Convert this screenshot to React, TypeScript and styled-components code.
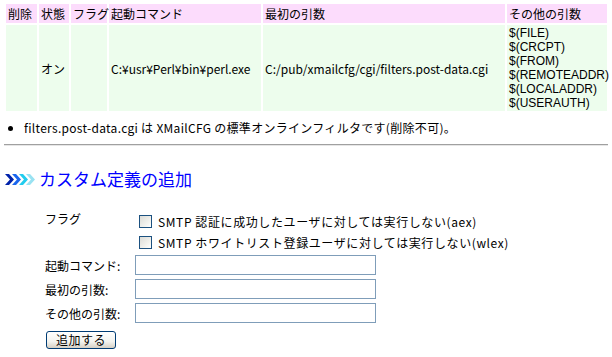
import React from "react";
import styled, { createGlobalStyle } from "styled-components";

const GlobalStyle = createGlobalStyle`
  html, body { margin: 0; padding: 0; background: #ffffff; }
  body {
    font-family: "Noto Sans CJK JP", "DejaVu Sans", sans-serif;
    font-size: 12px;
    color: #000000;
  }
  * { box-sizing: border-box; }
`;

const Page = styled.div`
  width: 612px;
  height: 357px;
  padding: 4px 4px 0 4px;
  overflow: hidden;
`;

const FilterTable = styled.div`
  display: grid;
  grid-template-columns: 31px 30px 36px 152px 242px 100px;
  grid-template-rows: 19px 86px;
  gap: 2px;
  margin-left: 2px;
`;

const HeadCell = styled.div`
  background: #fcdcfc;
  padding: 0 2px;
  display: flex;
  align-items: center;
  line-height: 19px;
  white-space: nowrap;
`;

const BodyCell = styled.div`
  background: #edfded;
  padding: 0 2px;
  display: flex;
  align-items: center;
  white-space: nowrap;
`;

const ArgList = styled.div`
  display: flex;
  flex-direction: column;
  font-family: "Liberation Sans", "Noto Sans CJK JP", sans-serif;
  font-size: 12px;
`;

const Arg = styled.div`
  height: 14px;
  line-height: 14px;
`;

const Note = styled.ul`
  margin: 10px 0 0 0;
  padding: 0 0 0 20px;
  line-height: 14px;
  list-style: disc;
  white-space: nowrap;
  letter-spacing: 0.3px;
`;

const Rule = styled.hr`
  margin: 9px 0 0 0;
  border: none;
  border-top: 1px solid #a0a0a0;
  border-bottom: 1px solid #e6e6e6;
  height: 0;
`;

const Heading = styled.h2`
  margin: 23px 0 0 1px;
  display: flex;
  align-items: center;
  gap: 3px;
  font-size: 17px;
  font-weight: normal;
  color: #0000ff;
  line-height: 20px;
  height: 20px;
`;

const Form = styled.div`
  margin: 23px 0 0 41px;
  display: grid;
  grid-template-columns: 90px 260px;
`;

const Label = styled.div<{ $top?: boolean }>`
  height: ${(p) => (p.$top ? "42px" : "24px")};
  line-height: ${(p) => (p.$top ? "13px" : "22px")};
  padding-top: ${(p) => (p.$top ? "0px" : "1px")};
  white-space: nowrap;
`;

const Checks = styled.div`
  display: flex;
  flex-direction: column;
`;

const CheckRow = styled.label`
  height: 21px;
  display: flex;
  align-items: center;
  gap: 6px;
  padding-left: 4px;
  padding-bottom: 2px;
  white-space: nowrap;
  letter-spacing: 0.6px;
`;

const Box = styled.input`
  appearance: none;
  flex: 0 0 13px;
  margin: 0;
  width: 13px;
  height: 13px;
  border: 1px solid #1c5180;
  background: linear-gradient(135deg, #dcdcd7 0%, #f4f4f0 70%, #ffffff 100%);
`;

const FieldCell = styled.div`
  height: 24px;
  padding-top: 1px;
`;

const TextField = styled.input`
  width: 241px;
  height: 20px;
  margin: 0;
  border: 1px solid #7f9db9;
  background: #ffffff;
  font-family: inherit;
  font-size: 12px;
  padding: 0 2px;
`;

const ButtonRow = styled.div`
  grid-column: 1 / span 2;
  padding-top: 5px;
  padding-left: 1px;
`;

const AddButton = styled.button`
  width: 70px;
  height: 18px;
  margin: 0;
  padding: 0;
  border: 1px solid #003c74;
  border-radius: 3px;
  background: linear-gradient(180deg, #ffffff 0%, #f3f3ef 60%, #d6d0c5 100%);
  font-family: inherit;
  font-size: 12px;
  line-height: 16px;
  letter-spacing: 0.5px;
  color: #000000;
`;

const Chevrons = () => (
  <svg width="31" height="11" viewBox="0 0 31 11">
    <path d="M0 0h4l5 5.5-5 5.5H0l5-5.5z" fill="#0022aa" />
    <path d="M7 0h4l5 5.5-5 5.5H7l5-5.5z" fill="#1a66ee" />
    <path d="M14 0h4l5 5.5-5 5.5h-4l5-5.5z" fill="#22ccee" />
    <path d="M21 0h4l5 5.5-5 5.5h-4l5-5.5z" fill="#99e2f2" />
  </svg>
);

const args = [
  "$(FILE)",
  "$(CRCPT)",
  "$(FROM)",
  "$(REMOTEADDR)",
  "$(LOCALADDR)",
  "$(USERAUTH)",
];

export default function App() {
  return (
    <>
      <GlobalStyle />
      <Page>
        <FilterTable>
          <HeadCell>削除</HeadCell>
          <HeadCell>状態</HeadCell>
          <HeadCell>フラグ</HeadCell>
          <HeadCell>起動コマンド</HeadCell>
          <HeadCell>最初の引数</HeadCell>
          <HeadCell>その他の引数</HeadCell>
          <BodyCell />
          <BodyCell>オン</BodyCell>
          <BodyCell />
          <BodyCell>C:¥usr¥Perl¥bin¥perl.exe</BodyCell>
          <BodyCell>C:/pub/xmailcfg/cgi/filters.post-data.cgi</BodyCell>
          <BodyCell>
            <ArgList>
              {args.map((a) => (
                <Arg key={a}>{a}</Arg>
              ))}
            </ArgList>
          </BodyCell>
        </FilterTable>
        <Note>
          <li>filters.post-data.cgi は XMailCFG の標準オンラインフィルタです(削除不可)。</li>
        </Note>
        <Rule />
        <Heading>
          <Chevrons />
          カスタム定義の追加
        </Heading>
        <Form>
          <Label $top>フラグ</Label>
          <Checks>
            <CheckRow>
              <Box type="checkbox" />
              SMTP 認証に成功したユーザに対しては実行しない(aex)
            </CheckRow>
            <CheckRow>
              <Box type="checkbox" />
              SMTP ホワイトリスト登録ユーザに対しては実行しない(wlex)
            </CheckRow>
          </Checks>
          <Label>起動コマンド:</Label>
          <FieldCell>
            <TextField type="text" />
          </FieldCell>
          <Label>最初の引数:</Label>
          <FieldCell>
            <TextField type="text" />
          </FieldCell>
          <Label>その他の引数:</Label>
          <FieldCell>
            <TextField type="text" />
          </FieldCell>
          <ButtonRow>
            <AddButton type="button">追加する</AddButton>
          </ButtonRow>
        </Form>
      </Page>
    </>
  );
}
